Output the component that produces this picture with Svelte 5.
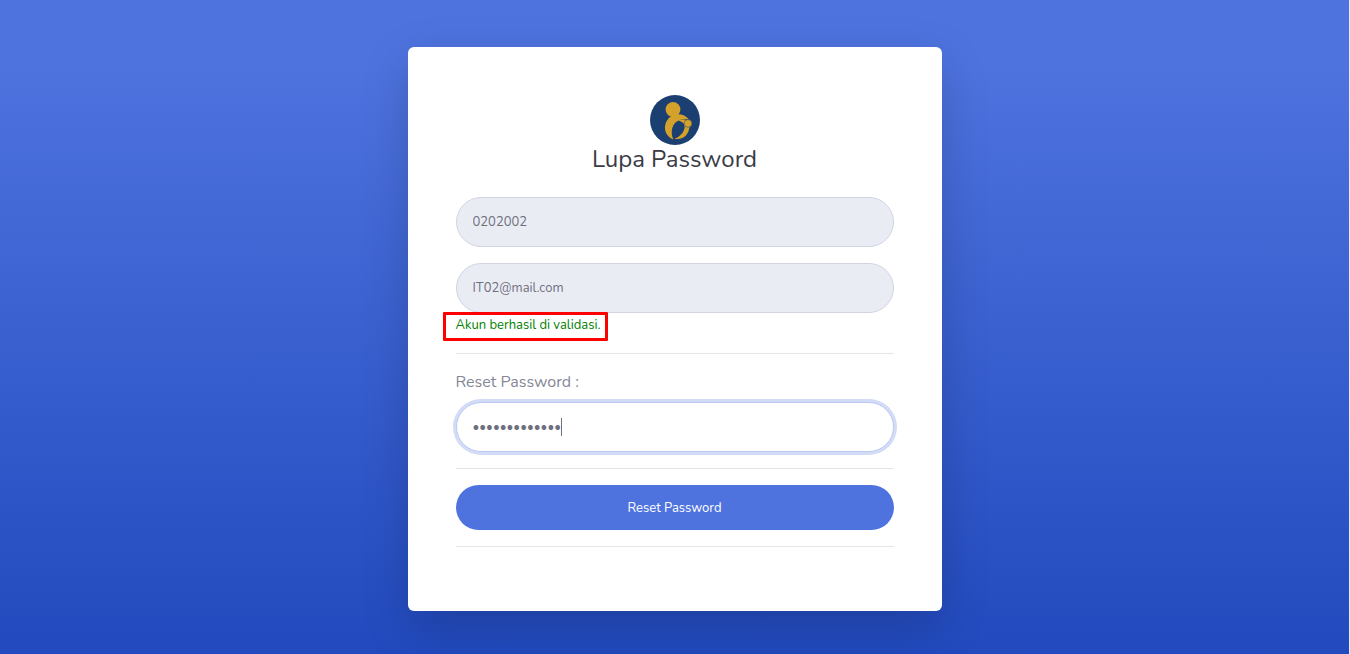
<script>
  let employeeId = $state('0202002');
  let email = $state('IT02@mail.com');
  let password = $state('rahasia123456');

  function focusOnMount(node) {
    node.focus();
    node.setSelectionRange(node.value.length, node.value.length);
  }
</script>

<main>
  <section class="card">
    <header>
      <svg class="logo" viewBox="0 0 50 50" aria-hidden="true">
        <circle cx="25" cy="25" r="25" fill="#1b3f71" />
        <circle cx="23" cy="14.4" r="7.4" fill="#d4a12a" />
        <path
          d="M39 24.500C34 18 25 17.500 19.500 22.500C12.500 29 13.500 40.500 23.500 44.600C21 39.500 21.200 33.500 24.200 29C27 25 32 23.400 39 24.500Z"
          fill="#d4a12a"
        />
        <path
          d="M28 25.700C31.500 24 35 24.200 37 25.500L39.500 31.500C39 39.500 33 45.500 24.500 43.700C31 41.500 35.500 35.500 34.500 30.500C33.600 27.500 31.500 26 28 25.700Z"
          fill="#d4a12a"
        />
        <circle cx="38" cy="28.400" r="3.900" fill="#d4a12a" stroke="#1b3f71" stroke-width="0.500" />
      </svg>
      <h1>Lupa Password</h1>
    </header>

    <form onsubmit={(event) => event.preventDefault()}>
      <input class="field" type="text" aria-label="ID" bind:value={employeeId} readonly />
      <input class="field" type="email" aria-label="Email" bind:value={email} readonly />
      <p class="status"><span>Akun berhasil di validasi.</span></p>
      <hr />
      <label for="new-password">Reset Password :</label>
      <div class="entry">
        <input id="new-password" class="field active" type="password" bind:value={password} use:focusOnMount />
        <span class="caret"></span>
      </div>
      <hr />
      <button type="submit">Reset Password</button>
      <hr />
    </form>
  </section>
</main>

<style>
  :global(body) {
    margin: 0;
    background: #fff;
  }

  main {
    box-sizing: border-box;
    min-height: 100vh;
    padding: 47px 16px 43px;
    border-right: 1px solid #e8ebf5;
    background: linear-gradient(180deg, #4e73df 10%, #224abe 100%);
    color: #858796;
    font-family: Nunito, Lato, sans-serif;
    font-size: 16px;
    line-height: 24px;
  }

  .card {
    box-sizing: border-box;
    max-width: 534px;
    margin: 0 auto;
    padding: 48px;
    border-radius: 6px;
    background: #fff;
    box-shadow: 0 16px 48px rgba(0, 0, 0, 0.175);
  }

  header {
    display: flex;
    flex-direction: column;
    align-items: center;
    margin-bottom: 24px;
  }

  .logo {
    width: 50px;
    height: 50px;
  }

  h1 {
    margin: 0;
    color: #3a3b45;
    font-size: 24px;
    font-weight: 400;
    line-height: 28px;
  }

  .field {
    display: block;
    box-sizing: border-box;
    width: 100%;
    height: 50px;
    margin: 0 0 16px;
    padding: 0 16px;
    border: 1px solid #d1d3e2;
    border-radius: 25px;
    outline: 0;
    background: #eaecf4;
    color: #6e707e;
    font-family: inherit;
    font-size: 13px;
  }

  .field[type='email'] {
    margin-bottom: 0;
  }

  .field.active {
    border-color: #bac8f3;
    background: #fff;
    box-shadow: 0 0 0 3px #d3dcf7;
    caret-color: transparent;
  }

  .entry {
    position: relative;
  }

  .caret {
    position: absolute;
    top: 16px;
    left: 105px;
    width: 1px;
    height: 18px;
    background: #6e707e;
  }

  .status {
    margin: 0 0 16px;
    color: #008000;
    font-size: 13px;
  }

  .status span {
    position: relative;
  }

  .status span::after {
    content: '';
    position: absolute;
    inset: -4px -8px -7px -13px;
    border: 3px solid #f00;
    border-radius: 1px;
  }

  hr {
    margin: 16px 0;
    border: 0;
    border-top: 1px solid #e5e5e6;
  }

  label {
    display: block;
    margin-bottom: 8px;
  }

  button {
    display: block;
    width: 100%;
    height: 45px;
    padding: 0;
    border: 0;
    border-radius: 25px;
    background: #4e73df;
    color: #fff;
    font-family: inherit;
    font-size: 13px;
    cursor: pointer;
  }
</style>
